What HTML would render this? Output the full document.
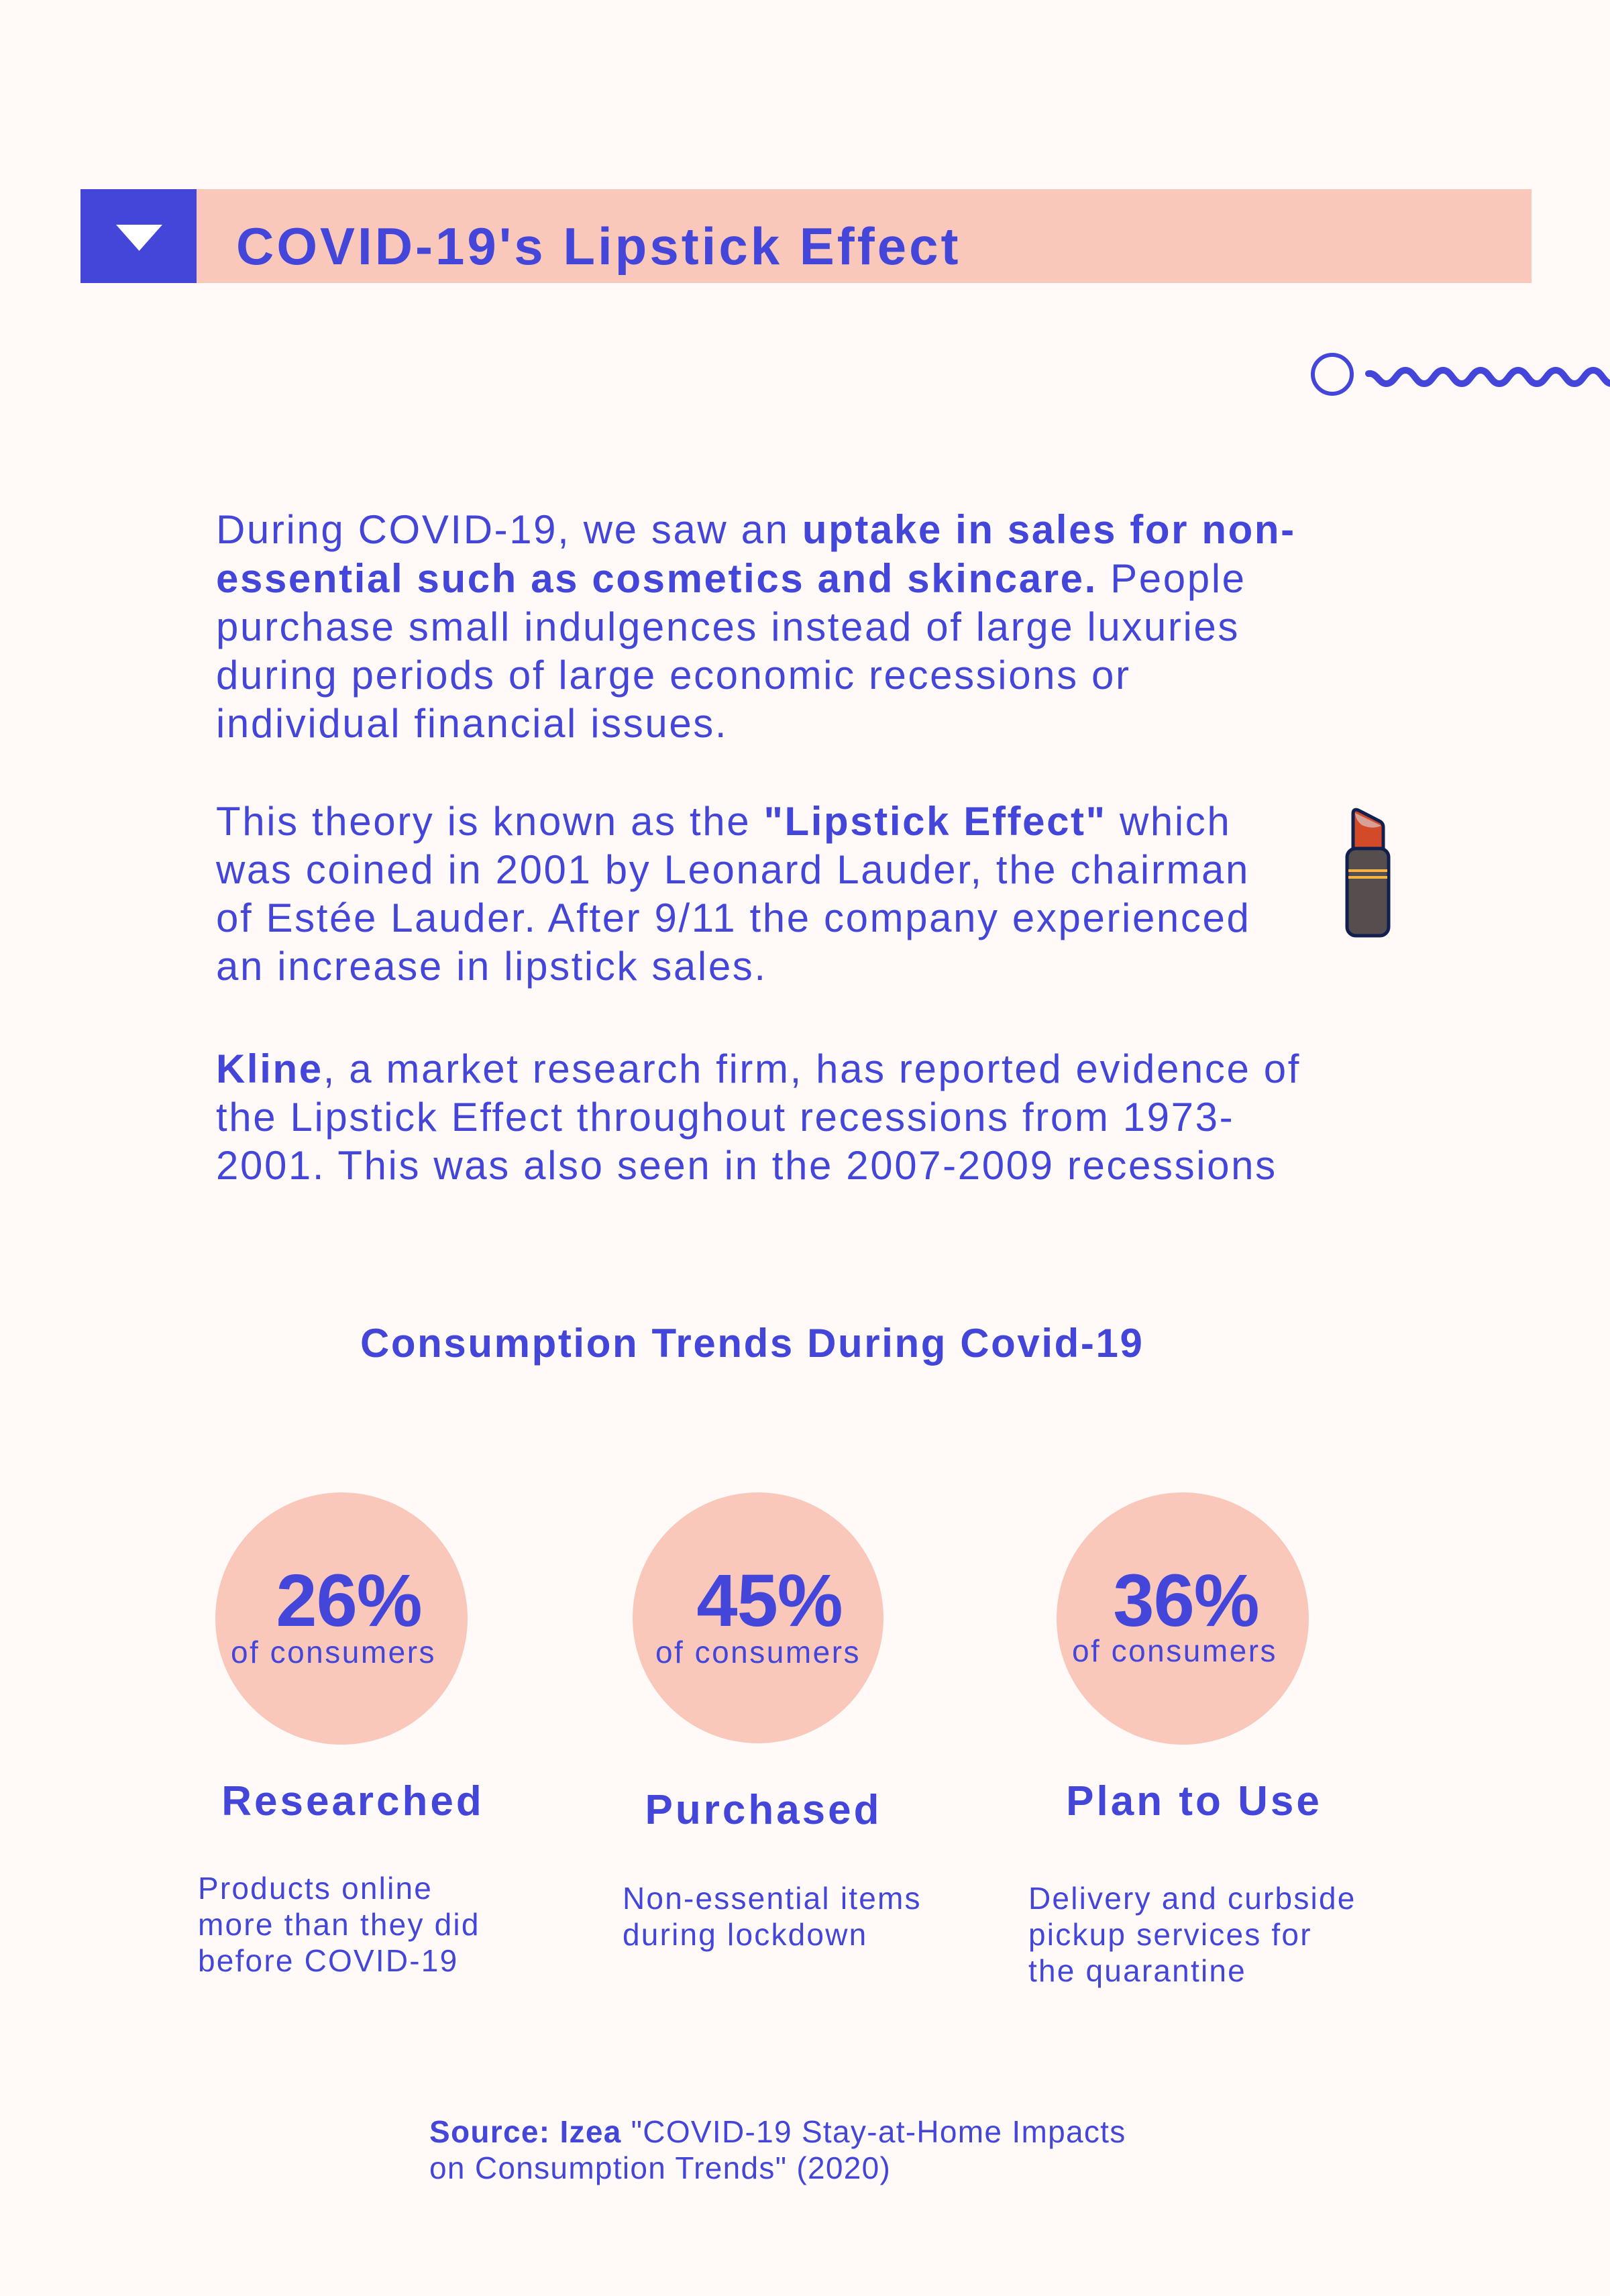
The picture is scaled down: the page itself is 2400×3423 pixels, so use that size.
<!DOCTYPE html>
<html><head><meta charset="utf-8"><style>
body{margin:0;background:#fffaf7;}
#p{position:relative;width:2400px;height:3423px;overflow:hidden;background:#fffaf7;font-family:"Liberation Sans",sans-serif;color:#4346d8;}
.a{position:absolute;white-space:pre;}
.l{font-size:60px;line-height:72px;letter-spacing:2.6px;left:322px;}
b{font-weight:bold;}
.c{position:absolute;width:376px;height:376px;border-radius:50%;background:#f9c8bb;}
.pc{position:absolute;font-weight:bold;font-size:110px;line-height:110px;text-align:center;width:400px;letter-spacing:-1px;}
.oc{position:absolute;font-size:46px;line-height:50px;text-align:center;width:400px;letter-spacing:2.5px;}
.lb{position:absolute;font-weight:bold;font-size:62px;line-height:70px;text-align:center;width:600px;letter-spacing:4px;}
.d{font-size:46px;line-height:54px;letter-spacing:2.2px;}
</style></head><body><div id="p">
<div class="a" style="left:120px;top:282px;width:173px;height:140px;background:#4346d8"></div>
<svg class="a" style="left:170px;top:330px" width="75" height="50"><polygon points="3,5 72,5 37.5,44" fill="#fff"/></svg>
<div class="a" style="left:293px;top:282px;width:1990px;height:140px;background:#f9c8bb"></div>
<div class="a" style="left:352px;top:322px;font-size:78px;line-height:90px;font-weight:bold;letter-spacing:4px">COVID-19's Lipstick Effect</div>
<svg class="a" style="left:1940px;top:510px" width="460" height="100">
<circle cx="46" cy="48" r="29" fill="none" stroke="#4346d8" stroke-width="6"/>
<path d="M100 47 C112 45 116 62 126 62 C140 62 142 42 155 42 C168 42 170 62 183 62 C196 62 198 42 211 42 C224 42 226 62 239 62 C252 62 254 42 267 42 C280 42 282 62 295 62 C308 62 310 42 323 42 C336 42 338 62 351 62 C364 62 366 42 379 42 C392 42 394 62 407 62 C420 62 422 42 435 42 C448 42 450 62 463 62" fill="none" stroke="#4346d8" stroke-width="10" stroke-linecap="round"/>
</svg>
<div class="a l" style="top:754px">During COVID-19, we saw an <b>uptake in sales for non-</b></div>
<div class="a l" style="top:827px"><b>essential such as cosmetics and skincare.</b> People</div>
<div class="a l" style="top:899px">purchase small indulgences instead of large luxuries</div>
<div class="a l" style="top:971px">during periods of large economic recessions or</div>
<div class="a l" style="top:1043px">individual financial issues.</div>
<div class="a l" style="top:1189px">This theory is known as the <b>"Lipstick Effect"</b> which</div>
<div class="a l" style="top:1261px">was coined in 2001 by Leonard Lauder, the chairman</div>
<div class="a l" style="top:1333px">of Estée Lauder. After 9/11 the company experienced</div>
<div class="a l" style="top:1405px">an increase in lipstick sales.</div>
<div class="a l" style="top:1558px"><b>Kline</b>, a market research firm, has reported evidence of</div>
<div class="a l" style="top:1630px">the Lipstick Effect throughout recessions from 1973-</div>
<div class="a l" style="top:1702px">2001. This was also seen in the 2007-2009 recessions</div>
<svg class="a" style="left:1995px;top:1195px" width="90" height="210">
<path d="M22 72 V18 Q22 10 30 13 L63 30 Q67 33 67 38 V72 Z" fill="#d24a28" stroke="#11204f" stroke-width="5"/>
<path d="M25 17 L64 36 Q50 42 35 35 Q26 28 25 17 Z" fill="#d7a198"/>
<rect x="13" y="70" width="62" height="130" rx="13" fill="#554d4e" stroke="#11204f" stroke-width="5"/>
<rect x="15" y="101" width="58" height="4" fill="#f5b345"/>
<rect x="15" y="111" width="58" height="4" fill="#f5b345"/>
</svg>
<div class="a" style="left:537px;top:1968px;font-size:60px;line-height:70px;font-weight:bold;letter-spacing:2.6px">Consumption Trends During Covid-19</div>
<div class="c" style="left:321px;top:2225px"></div>
<div class="c" style="left:943px;top:2225px;width:374px;height:374px"></div>
<div class="c" style="left:1575px;top:2225px"></div>
<div class="pc" style="left:320px;top:2332px">26%</div>
<div class="pc" style="left:947px;top:2332px">45%</div>
<div class="pc" style="left:1568px;top:2332px">36%</div>
<div class="oc" style="left:297px;top:2438px">of consumers</div>
<div class="oc" style="left:930px;top:2438px">of consumers</div>
<div class="oc" style="left:1551px;top:2436px">of consumers</div>
<div class="lb" style="left:226px;top:2651px">Researched</div>
<div class="lb" style="left:838px;top:2664px">Purchased</div>
<div class="lb" style="left:1480px;top:2651px">Plan to Use</div>
<div class="a d" style="left:295px;top:2788px">Products online
more than they did
before COVID-19</div>
<div class="a d" style="left:928px;top:2803px">Non-essential items
during lockdown</div>
<div class="a d" style="left:1533px;top:2803px">Delivery and curbside
pickup services for
the quarantine</div>
<div class="a d" style="left:640px;top:3151px;letter-spacing:1.3px"><b>Source: Izea</b> "COVID-19 Stay-at-Home Impacts
on Consumption Trends" (2020)</div>
</div></body></html>
